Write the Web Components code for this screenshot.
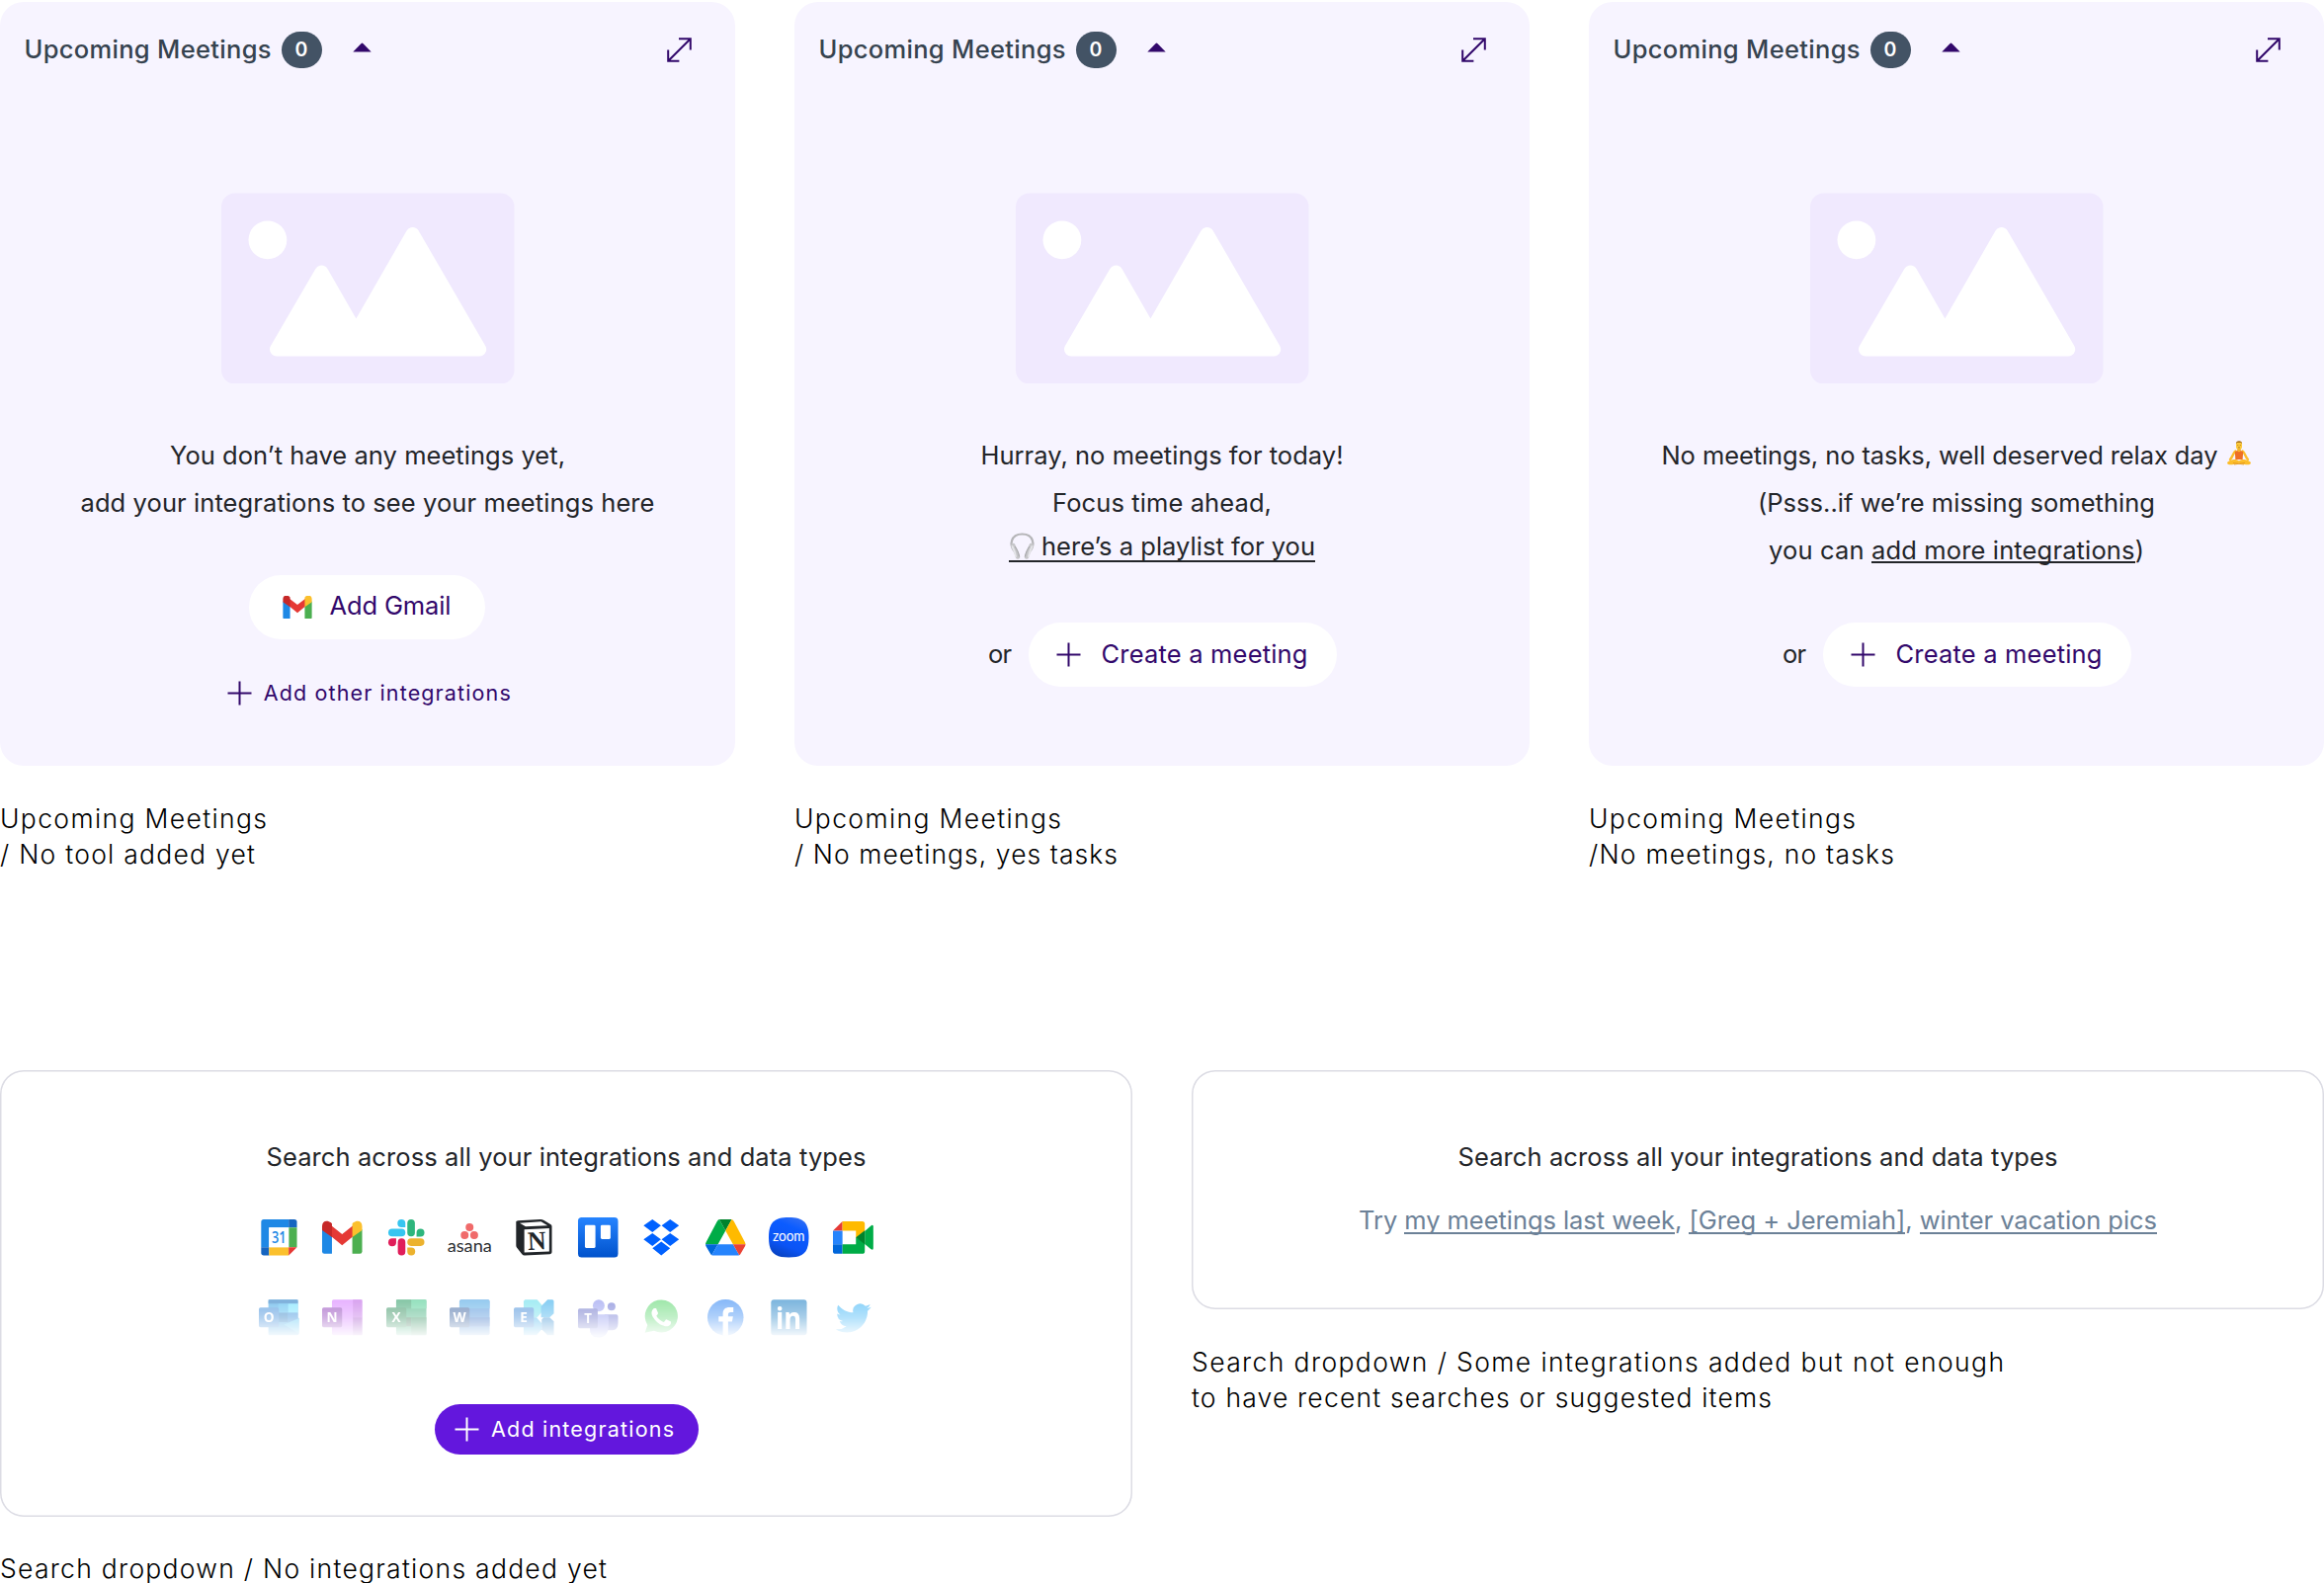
<!DOCTYPE html>
<html lang="en">
<head>
<meta charset="utf-8">
<title>Empty states</title>
<style>
html,body{margin:0;padding:0;background:#fff}
body{width:2352px;height:1602px;overflow:hidden;font-family:Inter,"Liberation Sans",sans-serif}
</style>
</head>
<body>
<empty-states-board></empty-states-board>
<script>
const define = (name, css, html, ready) => {
  const t = document.createElement('template');
  t.innerHTML = `<style>${css}</style>${html}`;
  customElements.define(name, class extends HTMLElement {
    constructor() {
      super();
      this.attachShadow({mode: 'open'}).append(t.content.cloneNode(true));
    }
    connectedCallback() { if (ready) ready.call(this, this.shadowRoot); }
  });
};

/* One line of text tracked out to the width given in "w". */
define('fit-text', `
  :host{display:block;width:max-content;white-space:pre;font-size:25.500px;line-height:48px}
  :host([small]){font-size:21.500px;line-height:26px}
  :host([medium]){font-weight:550}
`, `<slot></slot>`, function () {
  const w = +this.getAttribute('w');
  const n = this.textContent.length;
  this.style.letterSpacing = '0px';
  const ls = (w - this.getBoundingClientRect().width) / (n - 1);
  this.style.letterSpacing = ls.toFixed(4) + 'px';
  this.style.marginRight = (-ls).toFixed(4) + 'px';
});

define('ui-link', `
  :host{display:inline;background:linear-gradient(currentColor,currentColor) 0 calc(100% - var(--drop,2px))/100% 2px no-repeat}
`, `<slot></slot>`);

define('plus-icon', `:host{display:block;width:25px;height:25px}svg{display:block}`,
  `<svg width="25" height="25" viewBox="0 0 25 25"><path d="M12.5 .5v24M.5 12.5h24" stroke="currentColor" stroke-width="2"/></svg>`);

define('picture-placeholder', `:host{display:block;width:297px;height:193px}svg{display:block}`, `
<svg width="297" height="193" viewBox="224 194.500 297 193">
<rect x="224" y="195" width="296.500" height="193" rx="14" fill="#f0e9fe"/>
<circle cx="270.9" cy="242.3" r="19.4" fill="#fff"/>
<path d="M280 353L325.4 275L360.4 336L417.6 236.5L485.2 353Z" fill="#fff" stroke="#fff" stroke-width="14" stroke-linejoin="round"/>
</svg>`);

define('pill-button', `
  :host{display:flex;align-items:center;box-sizing:border-box;height:64.5px;border-radius:33px;background:#fff;color:#32086b;flex:none}
  :host([primary]){height:50.5px;background:#6317dd;color:#fff}
`, `<slot></slot>`);

define('count-badge', `
  :host{display:flex;align-items:center;justify-content:center;width:41px;height:37px;border-radius:19px;background:#435365;color:#fff;font-weight:600;font-size:19.500px;line-height:24px}
`, `<slot></slot>`);

define('meetings-card', `
  :host{display:flex;flex-direction:column;align-items:center;height:773px;border-radius:24px;background:#f7f4ff;color:#232529}
  header{display:flex;align-items:center;align-self:stretch;box-sizing:border-box;height:96px;padding:0 44.500px 0 24.500px;color:#36434f}
  header fit-text{margin-top:-1px}
  count-badge{margin-left:10px}
  .caret{margin:-5px auto 0 31px}
  picture-placeholder{margin-top:97px}
  .lines{display:flex;flex-direction:column;align-items:center;margin:49px 0 49px}
`, `
<header><fit-text medium w="250">Upcoming Meetings</fit-text><count-badge>0</count-badge>
<svg class="caret" width="19" height="10" viewBox="0 0 19 10"><path d="M.3 9.6L8.6 1Q9.5 .1 10.4 1L18.7 9.6Z" fill="#32086b"/></svg>
<svg width="25" height="25" viewBox="0 0 25 25"><path d="M12 1.2H23.8V12.6M23.8 1.2L1.2 23.8M1.2 12.4V23.8H12.4" fill="none" stroke="#32086b" stroke-width="2"/></svg>
</header>
<picture-placeholder></picture-placeholder>
<div class="lines"><slot></slot></div>
<slot name="actions"></slot>`);

define('state-caption', `
  :host{display:flex;flex-direction:column;color:#000;font-weight:300}
  ::slotted(fit-text){font-size:26.500px;line-height:36.3px}
`, `<slot></slot>`);

define('headphones-emoji', `:host{display:block;width:27px;height:27px}svg{display:block}`, `
<svg width="27" height="27" viewBox="0 0 27 27"><g fill="none" stroke-linecap="round">
<path d="M5 18C1 13 1.200 1.500 13.500 1.500S26 13 22 18" stroke="#b5b5b8" stroke-width="2.200"/>
<path d="M4.300 13C5.500 16 8 20 9 24.500" stroke="#c6c6c9" stroke-width="4.500"/><path d="M22.700 13C21.500 16 19 20 18 24.500" stroke="#c6c6c9" stroke-width="4.500"/>
<path d="M3.500 14C5 17 6.500 20 7 24M23.500 14C22 17 20.500 20 20 24" stroke="#e6e6ea" stroke-width="1.800"/>
<path d="M6.500 14.500C8 17 10 20 10.500 24M20.500 14.500C19 17 17 20 16.500 24" stroke="#a3a3a6" stroke-width="1"/></g></svg>`);

define('lotus-emoji', `:host{display:block;width:26px;height:26px}svg{display:block}`, `
<svg width="26" height="26" viewBox="0 0 26 26">
<path d="M9.500 10.500C7 12 7.300 15.500 4 19M16.500 10.500C19 12 18.700 15.500 22 19" stroke="#fbbd2c" stroke-width="2.400" fill="none" stroke-linecap="round"/>
<path d="M11.300 7h3.400v4h-3.400z" fill="#eda31c"/>
<path d="M8.800 11Q13 9 17.200 11L16.600 19H9.400Z" fill="#ee6f25"/>
<path d="M11 9.800Q13 12.500 15 9.800" fill="#fcc435"/>
<path d="M1.500 21.500C5 18.800 9 18 13 20.500C17 18 21 18.800 24.500 21.500C26 23.800 23 24.500 20 24.300L13 22.800L6 24.300C3 24.500 0 23.800 1.500 21.500Z" fill="#fcbd2b"/>
<path d="M7 22.500L18 24M19 22.300L8 24" stroke="#e89a18" stroke-width=".9"/>
<rect x="10" y=".8" width="6" height="8" rx="2.900" fill="#fdc93a"/>
<path d="M9.900 3.300Q9.800 .2 13 .2T16.100 3.300L15 2H11Z" fill="#a8731e"/>
<path d="M11.300 4.600h1M13.800 4.600h1M12 6.900h2" stroke="#91601a" stroke-width=".7"/></svg>`);

/* Brand marks, drawn around the origin in a 140-unit square. */
const office = (letter, badge, panel) => `${panel}<rect x="-61" y="-30" width="61" height="60" rx="5" fill="${badge}"/>
<text x="-30.500" y="15" text-anchor="middle" font-family="Open Sans" font-weight="700" font-size="41" fill="#fff">${letter}</text>`;
const marks = {
calendar: `<path d="M-54-47Q-54-55-46-55H30V-30H-30V30H-54Z" fill="#1e88e5"/><path d="M30-55H47Q55-55 55-47V-30H30Z" fill="#1565c0"/><path d="M-54 30H-30V55H-46Q-54 55-54 47Z" fill="#1565c0"/><path d="M30-30H55V30H30Z" fill="#4caf50"/><path d="M-30 30H30V55H-30Z" fill="#fbc02d"/><path d="M30 30H55L30 55Z" fill="#e53935"/><path d="M-30-30H30V30H-30Z" fill="#fff"/><text x="0" y="17" text-anchor="middle" font-family="Open Sans" font-weight="600" font-size="47" textLength="44" lengthAdjust="spacingAndGlyphs" fill="#1e88e5">31</text>`,
gmail: `<path d="M-61-25L-31-4V50H-54Q-61 50-61 43Z" fill="#1e88e5"/><path d="M61-25L31-4V50H54Q61 50 61 43Z" fill="#4caf50"/><path d="M-34-37L0-10L34-37V-4L0 24L-34-4Z" fill="#e53935"/><path d="M-61-22V-34C-61-50-46-54-34-45L-31-42V-1Z" fill="#c62828"/><path d="M61-22V-34C61-50 46-54 34-45L31-42V-1Z" fill="#fbc02d"/>`,
slack: `<g fill="#36c5f0"><rect x="-55" y="-26" width="52" height="23" rx="11.500"/><path d="M-15-31a12 12 0 1 1 12-12v12z"/></g><g fill="#2eb67d"><rect x="3" y="-55" width="23" height="52" rx="11.500"/><path d="M31-14a12 12 0 1 1 12 12h-12z"/></g><g fill="#ecb22e"><rect x="3" y="3" width="52" height="23" rx="11.500"/><path d="M15 31a12 12 0 1 1-12 12v-12z"/></g><g fill="#e01e5a"><rect x="-26" y="3" width="23" height="52" rx="11.500"/><path d="M-31 15a12 12 0 1 1-12-12h12z"/></g>`,
asana: `<g fill="#f06a6a"><circle cy="-31" r="12"/><circle cx="-15" cy="-7" r="12"/><circle cx="14" cy="-7" r="12"/></g><text x="-68" y="43" font-family="Lato" font-size="51" font-weight="400" textLength="136" lengthAdjust="spacingAndGlyphs" fill="#2b2e31">asana</text>`,
notion: `<path d="M-54-48Q-54-50-48-51L20-55Q26-55 31-52L52-39Q55-37 55-33V45Q55 50 49 51L-28 55Q-33 55-36 51L-52 31Q-54 28-54 24Z" fill="#212529"/><path d="M-43-44L22-48L42-36L-25-33Z" fill="#fff"/><path d="M-29-24L47-28V43L-29 46Z" fill="#fff"/><text x="9" y="37" text-anchor="middle" font-family="Liberation Serif" font-weight="700" font-size="80" textLength="56" lengthAdjust="spacingAndGlyphs" fill="#212529" transform="rotate(-3 9 10)">N</text>`,
trello: `<linearGradient id="t" x2="0" y2="1"><stop stop-color="#2684ff"/><stop offset="1" stop-color="#0052cc"/></linearGradient><rect x="-61" y="-61" width="122" height="122" rx="11" fill="url(#t)"/><rect x="-40" y="-38" width="32" height="70" rx="4" fill="#fff"/><rect x="8" y="-38" width="30" height="43" rx="4" fill="#fff"/>`,
dropbox: `<path d="M-27-55L-1-36L-27-16L-54-36ZM27-55L54-36L27-16L1-36ZM-27-13L-1 6L-27 26L-54 6ZM27-13L54 6L27 26L1 6ZM0 13L27 33L0 55L-27 33Z" fill="#0061ff"/>`,
drive: `<path d="M-19-55L0-20L-23 21H-61Q-61 18-59 14L-26-48Q-23-54-19-55Z" fill="#00ac47"/><path d="M-19-55H19L0-20Z" fill="#00832d"/><path d="M19-55Q23-54 26-48L59 14Q61 18 61 21H23L0-20Z" fill="#ffba00"/><path d="M-61 21H-23L-42 54Q-45 52-47 48L-59 28Q-61 24-61 21Z" fill="#0066da"/><path d="M-23 21H23L42 54Q39 55 36 55H-36Q-39 55-42 54Z" fill="#2684fc"/><path d="M61 21H23L42 54Q45 52 47 48L59 28Q61 24 61 21Z" fill="#ea4335"/>`,
zoom: `<linearGradient id="z" x1=".7" y1="0" x2=".3" y2="1"><stop stop-color="#2f6df5"/><stop offset=".25" stop-color="#0b5cff"/><stop offset=".7" stop-color="#0b54f5"/><stop offset="1" stop-color="#0842c0"/></linearGradient><path d="M0-61C45-61 61-45 61 0S45 61 0 61S-61 45-61 0S-45-61 0-61Z" fill="url(#z)"/><text x="-49" y="11" font-family="Lato" font-size="45" font-weight="400" textLength="98" lengthAdjust="spacingAndGlyphs" fill="#fff">zoom</text>`,
meet: `<path d="M-61-20L-32-49V-20Z" fill="#e53935"/><path d="M-32-49H28Q36-49 36-41V-18L9 2V-20H-32Z" fill="#ffba00"/><path d="M-61-20H-32V21H-61Z" fill="#2684fc"/><path d="M-61 21H-32V50H-53Q-61 50-61 42Z" fill="#0066da"/><path d="M-32 21H9V0L36 15V42Q36 50 28 50H-32Z" fill="#00ac47"/><path d="M36-19L54-35Q62-41 62-32V32Q62 41 54 35L36 20Z" fill="#00ac47"/><path d="M9 0L36-21V21Z" fill="#00832d"/>`,
outlook: office('O', '#1976d2', `<path d="M-32-49Q-32-54-27-54H53Q58-54 58-49V0L61 2V49Q61 54 56 54H-32Z" fill="#1c94e0"/><path d="M-32-54H58V-42H-32Z" fill="#0364b8"/><path d="M-2-42H28V-14H-2Z" fill="#28a8ea"/><path d="M28-42H58V-14H28Z" fill="#50d9ff"/><path d="M-2-14H28V14H-2Z" fill="#0364b8"/><path d="M28-14H58V5L28 20Z" fill="#0f78d4"/><path d="M61 2V49L15 22Z" fill="#35b8f1"/>`),
onenote: office('N', '#7719aa', `<rect x="-31" y="-54" width="92" height="108" rx="5" fill="#d06cff"/><path d="M33-54H61V0H33Z" fill="#b44fe0"/><path d="M33 0H61V54H33Z" fill="#9332bf"/>`),
excel: office('X', '#107c41', `<rect x="-31" y="-54" width="92" height="108" rx="5" fill="#21a366"/><path d="M-31-54H15V-27H-31Z" fill="#169154"/><path d="M15-54H61V-27H15Z" fill="#33c481"/><path d="M-31 0H15V27H-31Z" fill="#185c37"/><path d="M15 0H61V54H15Z" fill="#107c41"/>`),
word: office('W', '#17478f', `<rect x="-31" y="-54" width="92" height="108" rx="5" fill="#2b7cd3"/><path d="M-26-54H56Q61-54 61-49V-27H-31V-49Z" fill="#3499e0"/><path d="M-31 0H61V27H-31Z" fill="#185abd"/>`),
exchange: office('E', '#1e74d0', `<path d="M-27-54H10L28-34V-20L10 0H-31V-50Z" fill="#50d9e8"/><path d="M42-54H56Q61-54 61-49V-12L48 0H22V-34Z" fill="#18a0e8"/><path d="M-31 0H8L24 18V36L8 54H-31Z" fill="#28a8ea"/><path d="M30 0H48L61 12V54H42L24 36V7Z" fill="#0f78c8"/>`),
teams: `<circle cx="2" cy="-36" r="18" fill="#7b83eb"/><circle cx="41" cy="-33" r="12" fill="#5059c9"/><path d="M20-9H55Q61-9 61-3V18Q61 40 42 39H20Z" fill="#5059c9"/><path d="M-25-9H26Q32-9 32-3V28Q31 60 2 61T-25 30Z" fill="#7b83eb"/><rect x="-61" y="-27" width="60" height="60" rx="5" fill="#4b53bc"/><text x="-31" y="17" text-anchor="middle" font-family="Open Sans" font-weight="700" font-size="40" fill="#fff">T</text>`,
whatsapp: `<path d="M-50 47L-42 23A50 50 0 1 1-22 41Z" fill="#47d15c"/><path transform="translate(-59 -59) scale(4.900)" fill="#fff" d="M17.472 14.382c-.297-.149-1.758-.867-2.030-.967-.273-.099-.471-.148-.67.15-.197.297-.767.966-.94 1.164-.173.199-.347.223-.644.075-.297-.15-1.255-.463-2.390-1.475-.883-.788-1.480-1.761-1.653-2.059-.173-.297-.018-.458.130-.606.134-.133.298-.347.446-.52.149-.174.198-.298.298-.497.099-.198.050-.371-.025-.52-.075-.149-.669-1.612-.916-2.207-.242-.579-.487-.5-.669-.51-.173-.008-.371-.01-.57-.01-.198 0-.52.074-.792.372-.272.297-1.040 1.016-1.040 2.479 0 1.462 1.065 2.875 1.213 3.074.149.198 2.096 3.200 5.077 4.487.709.306 1.262.489 1.694.625.712.227 1.360.195 1.871.118.571-.085 1.758-.719 2.006-1.413.248-.694.248-1.289.173-1.413-.074-.124-.272-.198-.57-.347"/>`,
facebook: `<circle r="55" fill="#1877f2"/><path d="M-8 56V13H-21V-3H-8V-12C-8-25 0-31 12-31H24V-16H16C10-16 8-13 8-8V-3H23L20 13H8V56Z" fill="#fff"/>`,
linkedin: `<rect x="-54" y="-54" width="109" height="108" rx="9" fill="#0270be"/><text x="-40" y="36" font-family="Open Sans" font-weight="700" font-size="90" textLength="79" lengthAdjust="spacingAndGlyphs" fill="#fff">in</text>`,
twitter: `<path transform="translate(-52.500 -52) scale(4.500)" fill="#1da8f5" d="M23.953 4.570a10 10 0 01-2.825.775 4.958 4.958 0 002.163-2.723c-.951.555-2.005.959-3.127 1.184a4.920 4.920 0 00-8.384 4.482C7.690 8.095 4.067 6.130 1.640 3.162a4.822 4.822 0 00-.666 2.475c0 1.710.870 3.213 2.188 4.096a4.904 4.904 0 01-2.228-.616v.060a4.923 4.923 0 003.946 4.827 4.996 4.996 0 01-2.212.085 4.936 4.936 0 004.604 3.417 9.867 9.867 0 01-6.102 2.105c-.39 0-.779-.023-1.170-.067a13.995 13.995 0 007.557 2.209c9.053 0 13.998-7.496 13.998-13.985 0-.21 0-.42-.015-.63A9.935 9.935 0 0024 4.590z"/>`
};
define('brand-icon', `:host{display:block;width:46.5px;height:46.5px}svg{display:block;overflow:visible}`, ``, function (root) {
  const box = document.createElement('template');
  box.innerHTML = `<svg width="46.500" height="46.500" viewBox="-70 -70 140 140">${marks[this.getAttribute('name')]}</svg>`;
  root.append(box.content);
});

define('integration-grid', `
  :host{display:flex;flex-direction:column;gap:34.500px}
  div{display:flex;gap:18.070px;padding-right:1px}
  .faded{-webkit-mask-image:linear-gradient(rgba(0,0,0,.53) 10%,rgba(0,0,0,.34) 50%,rgba(0,0,0,.05) 90%);mask-image:linear-gradient(rgba(0,0,0,.53) 10%,rgba(0,0,0,.34) 50%,rgba(0,0,0,.05) 90%)}
`, `<div>${['calendar','gmail','slack','asana','notion','trello','dropbox','drive','zoom','meet'].map(n => `<brand-icon name="${n}"></brand-icon>`).join('')}</div>
<div class="faded">${['outlook','onenote','excel','word','exchange','teams','whatsapp','facebook','linkedin','twitter'].map(n => `<brand-icon name="${n}"></brand-icon>`).join('')}</div>`);

define('search-card', `
  :host{display:flex;flex-direction:column;align-items:center;box-sizing:border-box;padding-top:64px;box-shadow:inset 0 0 0 1.500px #dcdce4;border-radius:24px;background:#fff;color:#232529}
`, `<slot></slot>`);

define('empty-states-board', `
  :host{display:block;padding-top:2px}
  .meetings{display:grid;grid-template-columns:repeat(3,744px);gap:60px;height:1081px}
  .search{display:grid;grid-template-columns:repeat(2,1146px);gap:60px;align-items:start}
  .row{display:flex;align-items:center}
  .stack{display:flex;flex-direction:column;align-items:center}
  .meetings state-caption{margin-top:35px}
  .gmail{width:239px;padding-left:34px}
  .gmail fit-text{margin:-2px 0 0 17px}
  .other{margin-top:41.500px;gap:11.500px;color:#32086b;padding-left:3px}
  .or{gap:17.500px;padding-left:1px}
  .create{width:311.500px;padding-left:28px}
  .create fit-text{margin:-1px 0 0 20px}
  .playlist{border-bottom:2px solid;line-height:30px;height:29px;margin-top:5px;margin-bottom:12px;gap:6px}
  .playlist fit-text{line-height:30px;margin-top:1px}
  .relax{gap:8px}
  .relax lotus-emoji{margin-top:-4px}
  .hint{margin-top:16px;color:#6c8197;--drop:1px}
  integration-grid{margin:33.500px 0 65px}
  .add{width:267px;padding-left:20.500px}
  .add fit-text{margin:0 0 0 12px}
`, `
<section class="meetings">
 <article>
  <meetings-card>
   <fit-text w="400">You don’t have any meetings yet,</fit-text>
   <fit-text w="581">add your integrations to see your meetings here</fit-text>
   <div slot="actions" class="stack">
    <pill-button class="gmail"><svg width="30" height="23" viewBox="-61 -48 122 96">${marks.gmail}</svg><fit-text w="123">Add Gmail</fit-text></pill-button>
    <div class="row other"><plus-icon></plus-icon><fit-text small w="250">Add other integrations</fit-text></div>
   </div>
  </meetings-card>
  <state-caption><fit-text w="270">Upcoming Meetings</fit-text><fit-text w="258">/ No tool added yet</fit-text></state-caption>
 </article>
 <article>
  <meetings-card>
   <fit-text w="367">Hurray, no meetings for today!</fit-text>
   <fit-text w="222">Focus time ahead,</fit-text>
   <div class="row playlist"><headphones-emoji></headphones-emoji><fit-text w="277">here’s a playlist for you</fit-text></div>
   <div slot="actions" class="row or"><fit-text w="24">or</fit-text><pill-button class="create"><plus-icon></plus-icon><fit-text w="209">Create a meeting</fit-text></pill-button></div>
  </meetings-card>
  <state-caption><fit-text w="270">Upcoming Meetings</fit-text><fit-text w="327">/ No meetings, yes tasks</fit-text></state-caption>
 </article>
 <article>
  <meetings-card>
   <div class="row relax"><fit-text w="563">No meetings, no tasks, well deserved relax day</fit-text><lotus-emoji></lotus-emoji></div>
   <fit-text w="402">(Psss..if we’re missing something</fit-text>
   <fit-text w="380">you can <ui-link>add more integrations</ui-link>)</fit-text>
   <div slot="actions" class="row or"><fit-text w="24">or</fit-text><pill-button class="create"><plus-icon></plus-icon><fit-text w="209">Create a meeting</fit-text></pill-button></div>
  </meetings-card>
  <state-caption><fit-text w="270">Upcoming Meetings</fit-text><fit-text w="309">/No meetings, no tasks</fit-text></state-caption>
 </article>
</section>
<section class="search">
 <article>
  <search-card style="height:452px">
   <fit-text w="607">Search across all your integrations and data types</fit-text>
   <integration-grid></integration-grid>
   <pill-button primary class="add"><plus-icon></plus-icon><fit-text small w="185">Add integrations</fit-text></pill-button>
  </search-card>
  <state-caption style="margin-top:34px"><fit-text w="614">Search dropdown / No integrations added yet</fit-text></state-caption>
 </article>
 <article>
  <search-card style="height:242px">
   <fit-text w="607">Search across all your integrations and data types</fit-text>
   <fit-text w="808" class="hint">Try <ui-link>my meetings last week</ui-link>, <ui-link>[Greg + Jeremiah]</ui-link>, <ui-link>winter vacation pics</ui-link></fit-text>
  </search-card>
  <state-caption style="margin-top:35px"><fit-text w="822">Search dropdown / Some integrations added but not enough</fit-text><fit-text w="587">to have recent searches or suggested items</fit-text></state-caption>
 </article>
</section>`);
</script>
</body>
</html>
